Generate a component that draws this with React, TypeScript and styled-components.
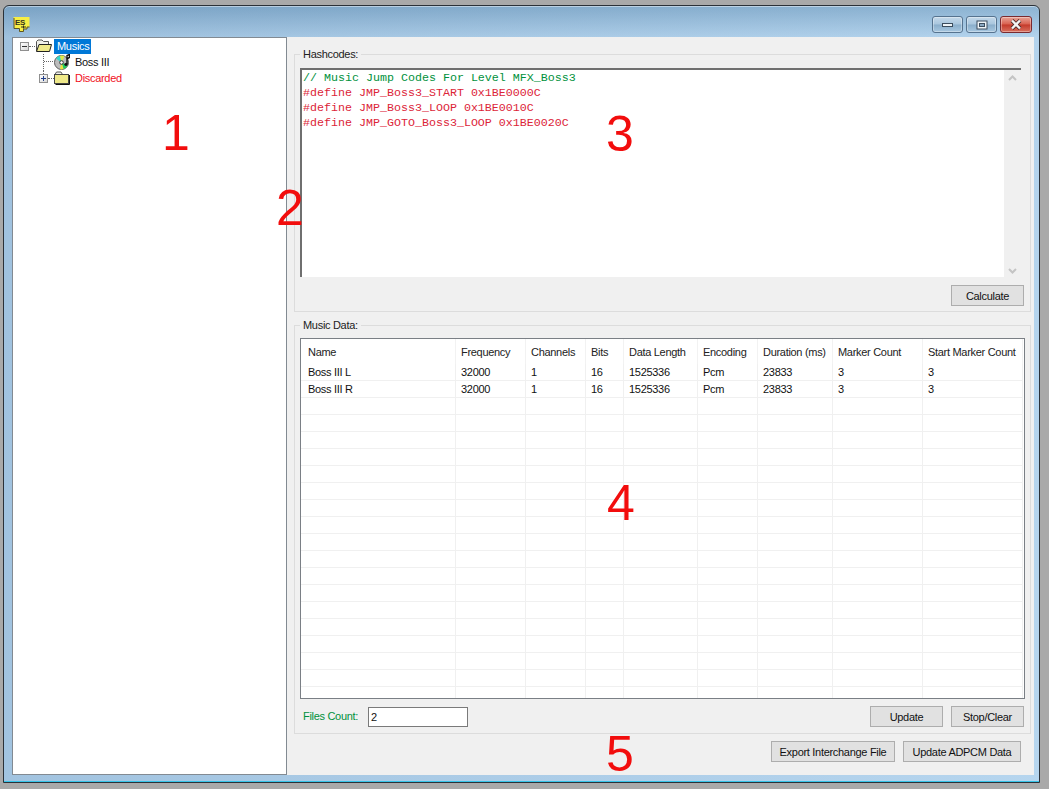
import React from 'react';
import styled, { createGlobalStyle } from 'styled-components';

const GlobalStyle = createGlobalStyle`
  html, body {
    margin: 0;
    padding: 0;
    background: #a9a9a9;
  }
  body {
    width: 1049px;
    height: 789px;
    overflow: hidden;
    font-family: "Liberation Sans", Arial, sans-serif;
    font-size: 11px;
    letter-spacing: -0.3px;
    color: #111;
  }
`;

const Desktop = styled.div`
  position: relative;
  width: 1049px;
  height: 789px;
  padding: 5px 0 0 3px;
  box-sizing: border-box;
`;

const Window = styled.div`
  width: 1037px;
  height: 778px;
  box-sizing: border-box;
  display: flex;
  flex-direction: column;
  border: 1px solid #2b3138;
  border-radius: 6px 6px 0 0;
  background: linear-gradient(100deg, rgba(100, 140, 175, 0.25), rgba(190, 220, 240, 0.25)),
    linear-gradient(#7fa8ca 0, #b3d3ee 31px);
  box-shadow: inset 0 -1px 0 #36c4e8, inset 0 1px 0 rgba(255, 255, 255, 0.45);
`;

const TitleBar = styled.div`
  height: 31px;
  flex: none;
  box-sizing: border-box;
  display: flex;
  align-items: flex-start;
  justify-content: space-between;
  padding: 10px 7px 0 9px;
`;

const CaptionButtons = styled.div`
  display: flex;
  gap: 3px;
`;

const CaptionButton = styled.div<{ $close?: boolean }>`
  width: ${(p) => (p.$close ? 32 : 31)}px;
  height: 17px;
  box-sizing: border-box;
  display: flex;
  align-items: center;
  justify-content: center;
  border: 1px solid ${(p) => (p.$close ? '#7a2a30' : '#56738f')};
  border-radius: 3px;
  background: ${(p) =>
    p.$close
      ? 'linear-gradient(#e8a498 0, #d9614f 48%, #c43a2a 52%, #d8705e 100%)'
      : 'linear-gradient(#c4d9ea 0, #a9c6de 48%, #8aaecb 52%, #a7c7e0 100%)'};
  box-shadow: inset 0 0 0 1px rgba(255, 255, 255, 0.35);
`;

const Client = styled.div`
  flex: 1;
  min-height: 0;
  margin: 0 5px 7px 8px;
  display: flex;
  background: #f0f0f0;
`;

const Tree = styled.div`
  width: 275px;
  flex: none;
  box-sizing: border-box;
  border: 1px solid #828a92;
  background: #fff;
`;

const TreeRow = styled.div<{ $indent: number }>`
  height: 16px;
  display: flex;
  align-items: center;
  padding-left: ${(p) => p.$indent}px;
`;

const Expander = styled.span<{ $stem?: boolean }>`
  position: relative;
  width: 9px;
  height: 9px;
  flex: none;
  box-sizing: border-box;
  border: 1px solid #8f8f8f;
  background: linear-gradient(135deg, #fff, #d8d8d8);
  display: flex;
  align-items: center;
  justify-content: center;
  ${(p) =>
    p.$stem &&
    `&::before {
      content: '';
      position: absolute;
      left: 3px;
      top: -5px;
      height: 4px;
      border-left: 1px dotted #666;
    }`}
`;

const ExpanderSign = styled.svg`
  display: block;
`;

const DotLine = styled.span<{ $width: number }>`
  width: ${(p) => p.$width}px;
  flex: none;
  border-top: 1px dotted #666;
`;

const Elbow = styled.svg`
  flex: none;
  display: block;
`;

const TreeIcon = styled.svg<{ $after: number }>`
  flex: none;
  display: block;
  margin-right: ${(p) => p.$after}px;
`;

const NodeLabel = styled.span<{ $tone?: 'selected' | 'red' }>`
  line-height: 15px;
  color: ${(p) => (p.$tone === 'selected' ? '#fff' : p.$tone === 'red' ? '#f0101c' : '#111')};
  background: ${(p) => (p.$tone === 'selected' ? '#0078d7' : 'transparent')};
  padding: ${(p) => (p.$tone === 'selected' ? '0 2px 0 3px' : '0')};
`;

const RightPane = styled.div`
  flex: 1;
  min-width: 0;
  padding: 10px 3px 0 7px;
`;

const Group = styled.fieldset<{ $height: number; $gap?: number }>`
  height: ${(p) => p.$height}px;
  margin: ${(p) => p.$gap ?? 0}px 0 0;
  padding: 0 6px 5px 5px;
  box-sizing: border-box;
  border: 1px solid #dcdcdc;
  min-width: 0;
`;

const Legend = styled.legend`
  padding: 0 3px;
  line-height: 14px;
  color: #222;
`;

const CodeBox = styled.div`
  width: 721px;
  height: 209px;
  margin-top: 7px;
  box-sizing: border-box;
  display: flex;
  border-top: 2px solid #6f6f6f;
  border-left: 2px solid #6f6f6f;
  background: #fff;
`;

const CodeText = styled.div`
  flex: 1;
  padding: 1px 0 0 1px;
  font-family: "Liberation Mono", "Courier New", monospace;
  font-size: 11.67px;
  letter-spacing: 0;
  line-height: 15px;
`;

const CodeLine = styled.div<{ $comment?: boolean }>`
  white-space: pre;
  color: ${(p) => (p.$comment ? '#00913c' : '#dc2438')};
`;

const ScrollTrack = styled.div`
  width: 17px;
  flex: none;
  display: flex;
  flex-direction: column;
  justify-content: space-between;
  align-items: center;
  padding: 5px 0 3px;
  background: #f0f0f0;
`;

const Chevron = styled.svg`
  display: block;
`;

const ButtonRow = styled.div<{ $top: number }>`
  display: flex;
  justify-content: flex-end;
  gap: 8px;
  margin-top: ${(p) => p.$top}px;
`;

const ActionRow = styled(ButtonRow)`
  padding-right: 10px;
`;

const Button = styled.button<{ $width: number }>`
  width: ${(p) => p.$width}px;
  height: 21px;
  padding: 0;
  box-sizing: border-box;
  border: 1px solid #adadad;
  border-radius: 0;
  background: #e1e1e1;
  color: #111;
  font: inherit;
  letter-spacing: inherit;
`;

const ListFrame = styled.div`
  width: 725px;
  height: 361px;
  margin-top: 6px;
  box-sizing: border-box;
  overflow: hidden;
  border: 1px solid #7a7f85;
  background: #fff;
`;

const DataTable = styled.table`
  width: 722px;
  table-layout: fixed;
  border-collapse: separate;
  border-spacing: 0;
`;

const HeadCell = styled.th`
  height: 25px;
  padding: 0 0 0 5px;
  box-sizing: border-box;
  font-weight: normal;
  text-align: left;
  white-space: nowrap;
  overflow: hidden;
  color: #222;
  border-right: 1px solid #f2f2f2;

  &:first-child {
    padding-left: 7px;
  }
`;

const Cell = styled.td`
  height: 17px;
  padding: 0 0 0 5px;
  box-sizing: border-box;
  white-space: nowrap;
  overflow: hidden;
  border-right: 1px solid #f0f0f0;
  border-bottom: 1px solid #f0f0f0;

  &:first-child {
    padding-left: 7px;
  }
`;

const Footer = styled.div`
  margin-top: 7px;
  height: 21px;
  display: flex;
  align-items: flex-start;
`;

const CountLabel = styled.label`
  width: 68px;
  padding-left: 3px;
  box-sizing: border-box;
  line-height: 21px;
  color: #00913c;
`;

const CountInput = styled.input`
  width: 100px;
  height: 20px;
  margin: 1px 0 0;
  padding: 0 2px;
  box-sizing: border-box;
  border: 1px solid #7a7a7a;
  border-radius: 0;
  outline: none;
  font: inherit;
  color: #111;
  background: #fff;
`;

const FooterButtons = styled(ButtonRow)`
  margin-left: auto;
`;

const Annotation = styled.div<{ $x: number; $y: number }>`
  position: absolute;
  left: ${(p) => p.$x}px;
  top: ${(p) => p.$y}px;
  transform: translate(-50%, -50%);
  font-size: 50px;
  line-height: 50px;
  letter-spacing: 0;
  color: #f20d0d;
`;

const columns = [
  { title: 'Name', width: 155 },
  { title: 'Frequency', width: 70 },
  { title: 'Channels', width: 60 },
  { title: 'Bits', width: 38 },
  { title: 'Data Length', width: 74 },
  { title: 'Encoding', width: 60 },
  { title: 'Duration (ms)', width: 75 },
  { title: 'Marker Count', width: 90 },
  { title: 'Start Marker Count', width: 100 },
];

const rows = [
  ['Boss III L', '32000', '1', '16', '1525336', 'Pcm', '23833', '3', '3'],
  ['Boss III R', '32000', '1', '16', '1525336', 'Pcm', '23833', '3', '3'],
];

const FILLER_ROWS = 18;

const codeLines = [
  '#define JMP_Boss3_START 0x1BE0000C',
  '#define JMP_Boss3_LOOP 0x1BE0010C',
  '#define JMP_GOTO_Boss3_LOOP 0x1BE0020C',
];

function AppIcon() {
  return (
    <svg width="17" height="16" viewBox="0 0 17 16">
      <path d="M0.5 1 H16.5 V11 H14 V13 H11 V15.5 H6 V13 H1.5 Z" fill="#f7ee45" />
      <path d="M1 2 V12.5 H6.5 V15.5 H10.5 V13 H14 V11 H16.5" fill="none" stroke="#5c5526" strokeWidth="1" />
      <text x="2" y="8.5" fontFamily="Liberation Sans" fontSize="8" fontWeight="bold" fill="#33301a">ES</text>
      <path d="M8 11 H13 M10.5 9.5 V12.5" stroke="#33301a" strokeWidth="1" />
    </svg>
  );
}

function FolderIcon({ open, after }: { open?: boolean; after: number }) {
  return (
    <TreeIcon $after={after} width={open ? 17 : 16} height="14" viewBox={open ? '0 0 17 14' : '0 0 16 14'}>
      {open ? (
        <>
          <path d="M1.5 12 V2.5 L3 1 H7 L8.5 2.5 H13.5 V5" fill="#f0f0ea" stroke="#555" strokeWidth="1" />
          <path d="M4 5.5 H16.5 L14.5 12.5 H1.5 Z" fill="#efe98a" stroke="#222" strokeWidth="1" />
        </>
      ) : (
        <>
          <path d="M1 3.5 L2.5 1 H7 L8.5 3.5 Z" fill="#f0f0ea" stroke="#555" strokeWidth="1" />
          <rect x="0.5" y="3.5" width="14" height="9" fill="#efe98a" stroke="#444" strokeWidth="1" />
          <path d="M15.5 4 V13.5 H1.5" fill="none" stroke="#111" strokeWidth="1" />
        </>
      )}
    </TreeIcon>
  );
}

function MusicDiscIcon() {
  return (
    <TreeIcon $after={5} width="16" height="16" viewBox="0 0 16 16">
      <circle cx="7.5" cy="8.5" r="7" fill="#bcbcbc" stroke="#5a5a5a" strokeWidth="1" />
      <path d="M7.5 8.5 L2 4.5 A7 7 0 0 1 6 1.8 Z" fill="#35d6c8" />
      <path d="M7.5 8.5 L6 1.8 A7 7 0 0 1 10.5 2.2 Z" fill="#dcec4a" />
      <path d="M7.5 8.5 L13.6 11.5 A7 7 0 0 1 9.5 15 Z" fill="#22cc5c" />
      <path d="M7.5 8.5 L9.5 15 A7 7 0 0 1 6 15.3 Z" fill="#eae23c" />
      <circle cx="7.5" cy="8.5" r="1.8" fill="#fff" stroke="#333" strokeWidth="1" />
      <path d="M13 10 V1.5 L15.5 0.5 V3.5 L13.5 4.5" fill="none" stroke="#111" strokeWidth="1.4" />
      <ellipse cx="12" cy="10.5" rx="1.7" ry="1.4" fill="#111" />
    </TreeIcon>
  );
}

function App() {
  return (
    <>
      <GlobalStyle />
      <Desktop>
        <Window>
          <TitleBar>
            <AppIcon />
            <CaptionButtons>
              <CaptionButton>
                <svg width="13" height="6" viewBox="0 0 13 6">
                  <rect x="1.5" y="1.5" width="10" height="3" fill="#eef4f8" stroke="#3c4d5e" strokeWidth="1" />
                </svg>
              </CaptionButton>
              <CaptionButton>
                <svg width="12" height="10" viewBox="0 0 12 10">
                  <rect x="1" y="1" width="10" height="8" fill="#eef4f8" stroke="#3c4d5e" strokeWidth="1" />
                  <rect x="3.5" y="3.5" width="5" height="3" fill="#8aa8c2" stroke="#3c4d5e" strokeWidth="1" />
                </svg>
              </CaptionButton>
              <CaptionButton $close>
                <svg width="14" height="11" viewBox="0 0 14 11">
                  <path d="M3 1.5 L11 9.5 M11 1.5 L3 9.5" stroke="#4a2a2a" strokeWidth="4" />
                  <path d="M3 1.5 L11 9.5 M11 1.5 L3 9.5" stroke="#f4f4f4" strokeWidth="2.4" />
                </svg>
              </CaptionButton>
            </CaptionButtons>
          </TitleBar>
          <Client>
            <Tree>
              <TreeRow $indent={7}>
                <Expander>
                  <ExpanderSign width="5" height="5" viewBox="0 0 5 5">
                    <path d="M0 2.5 H5" stroke="#333" strokeWidth="1" />
                  </ExpanderSign>
                </Expander>
                <DotLine $width={6} />
                <FolderIcon open after={2} />
                <NodeLabel $tone="selected">Musics</NodeLabel>
              </TreeRow>
              <TreeRow $indent={30}>
                <Elbow width="11" height="16" viewBox="0 0 11 16">
                  <path d="M0.5 0 V16 M1 7.5 H11" stroke="#666" strokeWidth="1" strokeDasharray="1 1" fill="none" />
                </Elbow>
                <MusicDiscIcon />
                <NodeLabel>Boss III</NodeLabel>
              </TreeRow>
              <TreeRow $indent={26}>
                <Expander $stem>
                  <ExpanderSign width="5" height="5" viewBox="0 0 5 5">
                    <path d="M0 2.5 H5 M2.5 0 V5" stroke="#24408a" strokeWidth="1" />
                  </ExpanderSign>
                </Expander>
                <DotLine $width={6} />
                <FolderIcon after={5} />
                <NodeLabel $tone="red">Discarded</NodeLabel>
              </TreeRow>
            </Tree>
            <RightPane>
              <Group $height={265}>
                <Legend>Hashcodes:</Legend>
                <CodeBox>
                  <CodeText>
                    <CodeLine $comment>// Music Jump Codes For Level MFX_Boss3</CodeLine>
                    {codeLines.map((line) => (
                      <CodeLine key={line}>{line}</CodeLine>
                    ))}
                  </CodeText>
                  <ScrollTrack>
                    <Chevron width="9" height="6" viewBox="0 0 9 6">
                      <path d="M1 5 L4.5 1.5 L8 5" fill="none" stroke="#c4c4c4" strokeWidth="2" />
                    </Chevron>
                    <Chevron width="9" height="6" viewBox="0 0 9 6">
                      <path d="M1 1 L4.5 4.5 L8 1" fill="none" stroke="#c4c4c4" strokeWidth="2" />
                    </Chevron>
                  </ScrollTrack>
                </CodeBox>
                <ButtonRow $top={8}>
                  <Button $width={73}>Calculate</Button>
                </ButtonRow>
              </Group>
              <Group $height={416} $gap={6}>
                <Legend>Music Data:</Legend>
                <ListFrame>
                  <DataTable>
                    <colgroup>
                      {columns.map((c) => (
                        <col key={c.title} width={c.width} />
                      ))}
                    </colgroup>
                    <thead>
                      <tr>
                        {columns.map((c) => (
                          <HeadCell key={c.title}>{c.title}</HeadCell>
                        ))}
                      </tr>
                    </thead>
                    <tbody>
                      {rows.map((row) => (
                        <tr key={row[0]}>
                          {row.map((value, i) => (
                            <Cell key={i}>{value}</Cell>
                          ))}
                        </tr>
                      ))}
                      {Array.from({ length: FILLER_ROWS }, (_, r) => (
                        <tr key={r}>
                          {columns.map((c) => (
                            <Cell key={c.title} />
                          ))}
                        </tr>
                      ))}
                    </tbody>
                  </DataTable>
                </ListFrame>
                <Footer>
                  <CountLabel>Files Count:</CountLabel>
                  <CountInput readOnly value="2" />
                  <FooterButtons $top={0}>
                    <Button $width={73}>Update</Button>
                    <Button $width={73}>Stop/Clear</Button>
                  </FooterButtons>
                </Footer>
              </Group>
              <ActionRow $top={7}>
                <Button $width={124}>Export Interchange File</Button>
                <Button $width={118}>Update ADPCM Data</Button>
              </ActionRow>
            </RightPane>
          </Client>
        </Window>
        <Annotation $x={176} $y={133}>1</Annotation>
        <Annotation $x={290} $y={208}>2</Annotation>
        <Annotation $x={620} $y={134}>3</Annotation>
        <Annotation $x={621} $y={503}>4</Annotation>
        <Annotation $x={620} $y={754}>5</Annotation>
      </Desktop>
    </>
  );
}

export default App;
